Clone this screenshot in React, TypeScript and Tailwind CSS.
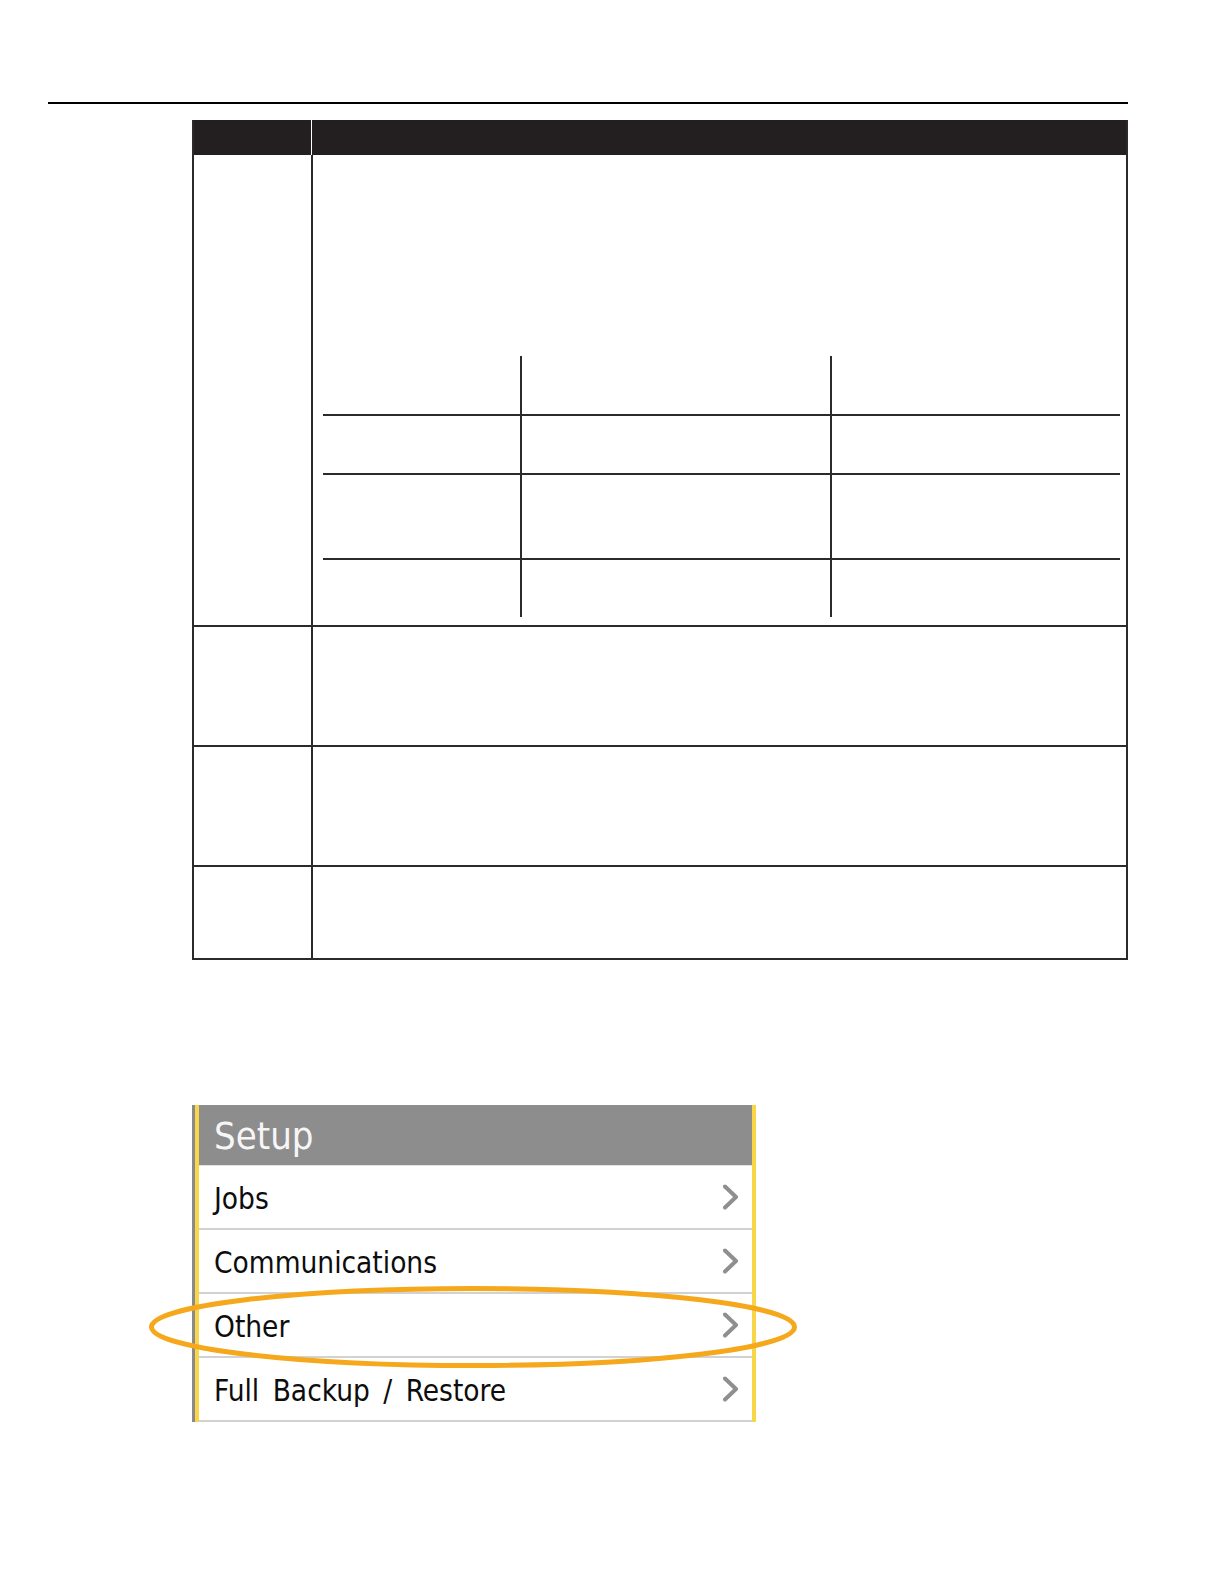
import React, { ReactElement } from 'react';

const innerCells: string[] = [
  '',
  'border-l-2 border-[#2d2a2b]',
  'border-l-2 border-[#2d2a2b]',
  'border-t-2 border-[#2d2a2b]',
  'border-t-2 border-l-2 border-[#2d2a2b]',
  'border-t-2 border-l-2 border-[#2d2a2b]',
  'border-t-2 border-[#2d2a2b]',
  'border-t-2 border-l-2 border-[#2d2a2b]',
  'border-t-2 border-l-2 border-[#2d2a2b]',
  'border-t-2 border-[#2d2a2b]',
  'border-t-2 border-l-2 border-[#2d2a2b]',
  'border-t-2 border-l-2 border-[#2d2a2b]',
];

const menuItems = ['Jobs', 'Communications', 'Other', 'Full Backup / Restore'];

const Chevron = (): ReactElement => (
  <svg width="18" height="26" viewBox="0 0 18 26" className="shrink-0">
    <polyline
      points="3,2.5 14,13 3,23.5"
      fill="none"
      stroke="#8f8f8f"
      strokeWidth="4"
      strokeLinejoin="round"
      strokeLinecap="round"
    />
  </svg>
);

const App = (): ReactElement => (
  <div className="relative h-[1584px] w-[1224px] overflow-hidden bg-white font-['DejaVu_Sans_Condensed','DejaVu_Sans',sans-serif] font-stretch-condensed">
    <div className="pt-[102px]">
      {/* page header rule */}
      <div className="ml-[48px] h-[2px] w-[1080px] bg-black" />

      {/* parameter table */}
      <div className="ml-[192px] mt-[16px] w-[936px] border-x-2 border-[#2d2a2b]">
        <div className="flex h-[35px] bg-[#231f20]">
          <div className="w-[118px] border-r border-white" />
          <div className="flex-1" />
        </div>

        <div className="grid h-[472px] grid-cols-[119px_1fr] border-b-2 border-[#2d2a2b]">
          <div className="border-r-2 border-[#2d2a2b]" />
          <div className="pl-[10px] pt-[201px]">
            <div className="grid w-[797px] grid-cols-[197px_310px_290px] grid-rows-[58px_59px_85px_59px]">
              {innerCells.map((cls, i) => (
                <div key={i} className={cls} />
              ))}
            </div>
          </div>
        </div>

        <div className="grid h-[120px] grid-cols-[119px_1fr] border-b-2 border-[#2d2a2b]">
          <div className="border-r-2 border-[#2d2a2b]" />
          <div />
        </div>
        <div className="grid h-[120px] grid-cols-[119px_1fr] border-b-2 border-[#2d2a2b]">
          <div className="border-r-2 border-[#2d2a2b]" />
          <div />
        </div>
        <div className="grid h-[93px] grid-cols-[119px_1fr] border-b-2 border-[#2d2a2b]">
          <div className="border-r-2 border-[#2d2a2b]" />
          <div />
        </div>
      </div>

      {/* setup menu screenshot */}
      <div className="ml-[192px] mt-[145px] flex w-[564px]">
        <div className="w-[3px] bg-[#8a8a8a]" />
        <div className="w-[4px] bg-[#f9d548]" />
        <div className="flex-1">
          <div className="flex h-[61px] items-center border-b border-[#e2e2e2] bg-[#8d8d8d] pl-[15px] text-[38px] leading-none text-[#f6f6f6]">
            <span className="pt-[2px]">Setup</span>
          </div>
          {menuItems.map((item) => (
            <div
              key={item}
              className="flex h-[64px] items-center justify-between border-b-2 border-[#d2d2d2] pl-[15px] pr-[12px] text-[29.5px] leading-none text-[#0d0d0d] [word-spacing:5px]"
            >
              <span className="pt-[5px]">{item}</span>
              <Chevron />
            </div>
          ))}
        </div>
        <div className="w-[4px] bg-[#f9d548]" />
      </div>
    </div>

    {/* highlight ring around "Other" */}
    <svg
      className="pointer-events-none absolute left-[146px] top-[1283px]"
      width="656"
      height="88"
      viewBox="0 0 656 88"
    >
      <ellipse cx="327" cy="44" rx="321.5" ry="38.5" fill="none" stroke="#f5a81c" strokeWidth="5" />
    </svg>
  </div>
);

export default App;
